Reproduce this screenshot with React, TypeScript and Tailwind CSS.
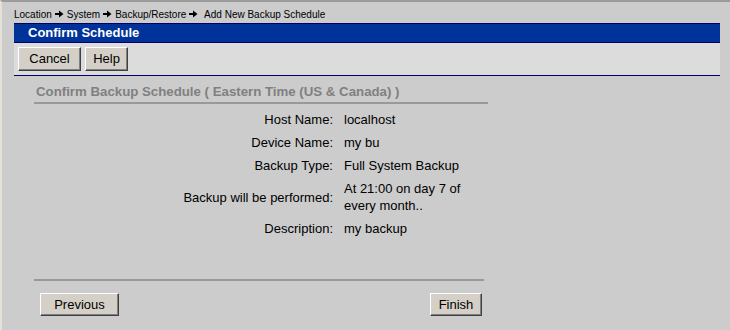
const rows = [
  { label: 'Host Name:', value: 'localhost' },
  { label: 'Device Name:', value: 'my bu' },
  { label: 'Backup Type:', value: 'Full System Backup' },
  { label: 'Backup will be performed:', value: 'At 21:00 on day 7 of every month..' },
  { label: 'Description:', value: 'my backup' },
];

function Arrow() {
  return (
    <svg width="9" height="8" viewBox="0 0 9 8" className="inline-block mx-[3px] align-[0px]">
      <path d="M0 3h4V0.5L8.5 4L4 7.5V5H0z" fill="#000" />
    </svg>
  );
}

function WinButton({ label, className = '' }: { label: string; className?: string }) {
  return (
    <button
      className={`h-full bg-[#d4d0c8] text-[13px] text-black border border-t-white border-l-white border-r-[#404040] border-b-[#404040] shadow-[inset_-1px_-1px_0_#808080] ${className}`}
    >
      {label}
    </button>
  );
}

export default function App() {
  return (
    <div className="w-[730px] h-[330px] overflow-hidden bg-[#cccccc] border-t-2 border-t-[#9c9c9c] border-l-2 border-l-[#e6e2da] font-['Liberation_Sans',Arial,sans-serif] text-black">
      {/* Breadcrumb */}
      <div className="h-[21px] pl-[12px] pt-[6px] text-[10px] leading-[14px]">
        Location<Arrow />System<Arrow />Backup/Restore<Arrow />&nbsp;Add New Backup Schedule
      </div>

      {/* Title bar */}
      <div className="ml-[12px] w-[706px] h-[20px] bg-[#003399] border-y border-[#000066] pl-[14px] text-white font-bold text-[13px] leading-[18px]">
        Confirm Schedule
      </div>

      {/* Toolbar */}
      <div className="ml-[12px] w-[706px] h-[33px] bg-[#dcdcdc] border-b border-[#000066] pt-[4px] pl-[4px] flex gap-[4px]">
        <div className="h-[24px] flex gap-[4px]">
          <WinButton label="Cancel" className="w-[63px]" />
          <WinButton label="Help" className="w-[43px]" />
        </div>
      </div>

      {/* Content */}
      <div className="ml-[32px] w-[454px] mt-[8px]">
        <div className="pl-[2px] pb-[2px] border-b-2 border-[#999999] text-[13.25px] leading-[16px] font-bold text-[#808080]">
          Confirm Backup Schedule ( Eastern Time (US &amp; Canada) )
        </div>

        <div className="mt-[4px] text-[13px] leading-[17px]">
          {rows.map((r) => (
            <div key={r.label} className="flex py-[3px]">
              <div className="w-[299px] text-right flex items-center justify-end">{r.label}</div>
              <div className="w-[125px] pl-[11px] box-content">{r.value}</div>
            </div>
          ))}
        </div>
      </div>

      {/* Footer */}
      <div className="ml-[32px] w-[450px] mt-[39px] border-t-2 border-[#999999] pt-[11px] pl-[6px] flex justify-between items-start">
        <div className="h-[23px]">
          <WinButton label="Previous" className="w-[79px]" />
        </div>
        <div className="h-[23px] mr-[2px]">
          <WinButton label="Finish" className="w-[52px]" />
        </div>
      </div>
    </div>
  );
}
